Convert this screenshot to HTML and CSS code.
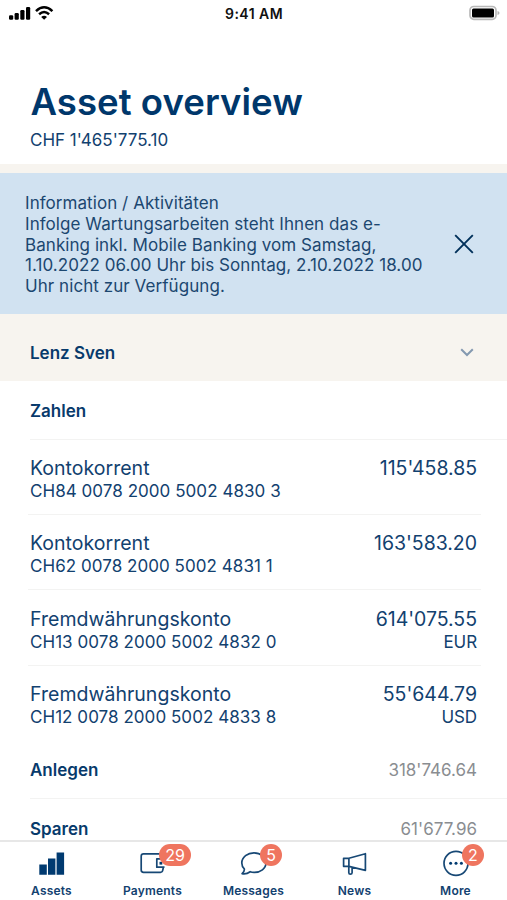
FILE: index.html
```html
<!DOCTYPE html>
<html lang="en">
<head>
<meta charset="utf-8">
<meta name="viewport" content="width=device-width, initial-scale=1">
<title>Asset overview</title>
<link rel="stylesheet" href="styles.css">
</head>
<body>
<div class="app">
  <div class="status">
    <svg class="status-left" width="48" height="16" viewBox="0 0 48 16">
      <rect x="1" y="10.300" width="4.200" height="4.500" rx="1.200"/>
      <rect x="6.600" y="8" width="4.200" height="6.800" rx="1.200"/>
      <rect x="12.300" y="5" width="4.200" height="9.800" rx="1.200"/>
      <rect x="18" y="2" width="4.200" height="12.800" rx="1.200"/>
      <g fill="none" stroke="#000" stroke-width="2.500">
        <path d="M28 6.100Q36.100 -1.500 44.400 6.100"/>
        <path d="M31.100 9.300Q36.100 4.800 41.100 9.300"/>
      </g>
      <path d="M33.200 12Q36.100 9.700 39 12L36.100 14.800Z"/>
    </svg>
    <span class="clock">9:41 AM</span>
    <svg class="battery" width="32" height="16" viewBox="0 0 32 16">
      <rect x="2" y="1.500" width="26" height="12.800" rx="3.800" fill="#fff" stroke="#b9b9b9" stroke-width="1.700"/>
      <rect x="4" y="3.500" width="22" height="8.900" rx="1.500"/>
      <path d="M29.500 5.900Q31.500 6.500 31.500 8T29.500 10.100Z" fill="#b3b3b3"/>
    </svg>
  </div>
  <header class="header">
    <h1 class="title">Asset overview</h1>
    <p class="total">CHF 1'465'775.10</p>
  </header>
  <section class="notice">
    <p class="notice-text">Information / Aktivitäten<br>Infolge Wartungsarbeiten steht Ihnen das e-<br>Banking inkl. Mobile Banking vom Samstag,<br>1.10.2022 06.00 Uhr bis Sonntag, 2.10.2022 18.00<br>Uhr nicht zur Verfügung.</p>
    <svg class="close" width="20" height="20" viewBox="0 0 20 20"><path d="M1.200 1.200L18.800 18.800M18.800 1.200L1.200 18.800"/></svg>
  </section>
  <section class="owner">
    <span class="strong">Lenz Sven</span>
    <svg class="chevron" width="14" height="9" viewBox="0 0 14 9"><path d="M1.200 1.200L7 7L12.800 1.200"/></svg>
  </section>
  <main class="accounts">
    <div class="group"><span class="strong">Zahlen</span></div>
    <div class="account">
      <div class="line"><span class="name">Kontokorrent</span><span class="amount">115'458.85</span></div>
      <div class="line sub"><span class="iban">CH84 0078 2000 5002 4830 3</span></div>
    </div>
    <div class="account">
      <div class="line"><span class="name">Kontokorrent</span><span class="amount">163'583.20</span></div>
      <div class="line sub"><span class="iban">CH62 0078 2000 5002 4831 1</span></div>
    </div>
    <div class="account">
      <div class="line"><span class="name">Fremdwährungskonto</span><span class="amount">614'075.55</span></div>
      <div class="line sub"><span class="iban">CH13 0078 2000 5002 4832 0</span><span class="currency">EUR</span></div>
    </div>
    <div class="account last">
      <div class="line"><span class="name">Fremdwährungskonto</span><span class="amount">55'644.79</span></div>
      <div class="line sub"><span class="iban">CH12 0078 2000 5002 4833 8</span><span class="currency">USD</span></div>
    </div>
    <div class="group"><span class="strong">Anlegen</span><span class="sum">318'746.64</span></div>
    <div class="group"><span class="strong">Sparen</span><span class="sum">61'677.96</span></div>
  </main>
  <nav class="tabs">
    <a class="tab">
      <svg class="icon solid" width="32" height="28" viewBox="0 0 32 28"><path d="M3.300 14.600h7.500v10.200h-7.500zM12 8.600h7.400v16.200h-7.400zM20.600 2.500h7.500v22.300h-7.500z"/></svg>
      <span>Assets</span>
    </a>
    <a class="tab">
      <svg class="icon" width="32" height="28" viewBox="0 0 32 28"><path d="M26 9V6.200Q26 3.900 23.700 3.900H6.500Q4.200 3.900 4.200 6.200V20Q4.200 22.300 6.500 22.300H23.400Q25.500 22.300 25.800 20L26.300 17.500M27.500 8.800H19.800V17.200H27.500"/><rect class="dot" x="22.500" y="11.800" width="2.800" height="2.800"/></svg>
      <span>Payments</span>
      <b class="badge wide">29</b>
    </a>
    <a class="tab">
      <svg class="icon" width="32" height="28" viewBox="0 0 32 28"><path d="M4.100 23.700Q6.800 21.300 6.300 18.800Q3.700 16.500 3.800 12.800C4 7 9.500 2.900 16 2.900S28 7 28 12.800S22.500 22.500 16 22.300Q14 22.300 12.200 21.700Q8.500 24.500 4.100 23.700Z"/></svg>
      <span>Messages</span>
      <b class="badge">5</b>
    </a>
    <a class="tab">
      <svg class="icon" width="32" height="28" viewBox="0 0 32 28"><path d="M9.900 8.300H4.600V16.300H9.900M9.900 8.300V16.300L26.400 20.300V3.700L9.900 8.300M9.800 16.500V22.700Q9.800 24.100 11.400 24.100T13.100 22.700V17.200"/></svg>
      <span>News</span>
    </a>
    <a class="tab">
      <svg class="icon" width="32" height="28" viewBox="0 0 32 28"><circle cx="16" cy="13.300" r="12"/><g class="dot"><circle cx="10.600" cy="13.300" r="1.500"/><circle cx="16" cy="13.300" r="1.500"/><circle cx="21.400" cy="13.300" r="1.500"/></g></svg>
      <span>More</span>
      <b class="badge">2</b>
    </a>
  </nav>
</div>
</body>
</html>
```

FILE: styles.css
```css
* { box-sizing: border-box; }
body { margin: 0; background: #fff; color: #12416f; font-family: Inter, "Liberation Sans", sans-serif; }
h1, p { margin: 0; }
.app { height: 900px; display: flex; flex-direction: column; overflow: hidden; }
.status { display: grid; grid-template-columns: 1fr auto 1fr; height: 28px; padding: 5px 7px 0 8px; color: #111; flex: none; }
.clock { font-size: 14px; line-height: 18px; font-weight: 600; letter-spacing: 0.450px; }
.battery { justify-self: end; }
.header { height: 136px; padding: 50px 30px 0; flex: none; }
.title { font-size: 36.500px; line-height: 48px; font-weight: 600; color: #00376b; letter-spacing: 0.050px; padding-left: 0.500px; }
.total { font-size: 17px; line-height: 24px; margin-top: 2px; }
.notice { display: flex; align-items: center; justify-content: space-between; height: 150px; padding: 0 33px 0 25px; border-top: 9px solid #f7f4ef; background: #d1e2f1; flex: none; color: #1c4770; }
.notice-text { font-size: 17px; line-height: 20.700px; white-space: nowrap; letter-spacing: 0.060px; padding-top: 3px; }
.close { fill: none; stroke: #00305a; stroke-width: 1.900; }
.owner { display: flex; align-items: center; justify-content: space-between; height: 67px; padding: 10px 33px 0 30px; background: #f7f4ef; flex: none; }
.chevron { fill: none; stroke: #8499b0; stroke-width: 2; }
.strong { font-size: 17px; font-weight: 600; color: #073a6b; }
.accounts { flex: 1; min-height: 0; overflow: hidden; }
.group { display: flex; align-items: center; justify-content: space-between; height: 58.500px; margin-left: 30px; padding: 2.500px 30px 0 0; border-bottom: 1px solid #f3f3f2; }
.account { height: 75.400px; margin: 0 26px 0 28px; padding: 15.500px 4px 0 2px; border-bottom: 1px solid #f3f3f2; }
.account.last { border-bottom: 0; height: 74.400px; }
.line { display: flex; justify-content: space-between; font-size: 19.500px; line-height: 26px; }
.name { letter-spacing: 0.020px; }
.amount { letter-spacing: -0.030px; }
.sub { font-size: 17px; line-height: 20px; }
.iban { letter-spacing: 0.050px; }
.currency { letter-spacing: -0.100px; }
.sum { font-size: 17px; color: #8a8d91; }
.tabs { display: grid; grid-template-columns: repeat(5, 101px); justify-content: center; height: 60px; border-top: 2px solid #e7e7e7; background: #fff; flex: none; }
.tab { position: relative; display: flex; flex-direction: column; align-items: center; padding-top: 8px; font-size: 12px; line-height: 18px; font-weight: 600; letter-spacing: 0.200px; }
.icon { fill: none; stroke: #174875; stroke-width: 1.700; stroke-linejoin: round; margin-bottom: 4px; }
.solid, .dot { fill: #003a70; stroke: none; }
.badge { position: absolute; top: 2px; left: 57px; width: 22px; height: 22px; border-radius: 11px; background: #ef755f; color: #fff; font-size: 16px; line-height: 22px; font-weight: 400; letter-spacing: 0; text-align: center; }
.wide { width: 32px; }
```
